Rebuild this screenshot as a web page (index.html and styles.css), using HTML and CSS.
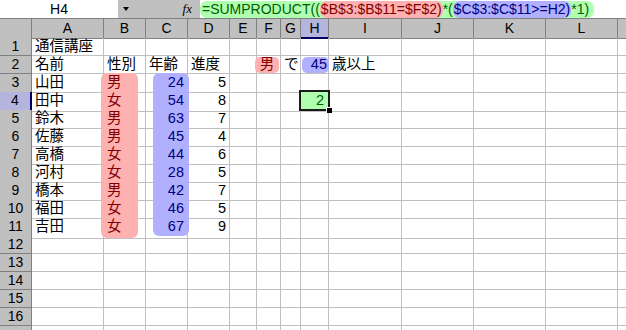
FILE: index.html
```html
<!DOCTYPE html>
<html lang="ja">
<head>
<meta charset="UTF-8">
<title>SUMPRODUCT</title>
<link rel="stylesheet" href="styles.css">
</head>
<body>
<div class="fbar">
    <div class="namebox">H4</div>
    <div class="tools">
        <span class="arrow"></span>
        <span class="fx">fx</span>
    </div>
    <div class="formula">
        <span class="f-all">=SUMPRODUCT((<span class="f-red">$B$3:$B$11=$F$2)</span>*(<span class="f-blue">$C$3:$C$11&gt;=H2)</span>*1)</span>
    </div>
</div>

<div class="sheet">
    <div class="row head">
        <div class="corner"></div>
        <div class="ch">A</div><div class="ch">B</div><div class="ch">C</div><div class="ch">D</div>
        <div class="ch">E</div><div class="ch">F</div><div class="ch">G</div><div class="ch on">H</div>
        <div class="ch">I</div><div class="ch">J</div><div class="ch">K</div><div class="ch">L</div><div class="ch"></div>
    </div>

    <div class="row">
        <div class="rh">1</div>
        <div class="c">通信講座</div><div class="c"></div><div class="c"></div><div class="c"></div>
        <div class="c"></div><div class="c"></div><div class="c"></div><div class="c"></div>
        <div class="c"></div><div class="c"></div><div class="c"></div><div class="c"></div><div class="c"></div>
    </div>
    <div class="row">
        <div class="rh">2</div>
        <div class="c">名前</div><div class="c">性別</div><div class="c">年齢</div><div class="c">進度</div>
        <div class="c"></div>
        <div class="c bare"><div class="pill red">男</div></div>
        <div class="c">で</div>
        <div class="c bare"><div class="pill blue">45</div></div>
        <div class="c">歳以上</div><div class="c"></div><div class="c"></div><div class="c"></div><div class="c"></div>
    </div>
    <div class="row">
        <div class="rh">3</div>
        <div class="c">山田</div>
        <div class="c bare"><div class="band red first">男</div></div>
        <div class="c bare"><div class="band blue first">24</div></div>
        <div class="c n">5</div>
        <div class="c"></div><div class="c"></div><div class="c"></div><div class="c"></div>
        <div class="c"></div><div class="c"></div><div class="c"></div><div class="c"></div><div class="c"></div>
    </div>
    <div class="row">
        <div class="rh on">4</div>
        <div class="c">田中</div>
        <div class="c bare"><div class="band red">女</div></div>
        <div class="c bare"><div class="band blue">54</div></div>
        <div class="c n">8</div>
        <div class="c"></div><div class="c"></div><div class="c"></div>
        <div class="c bare"><div class="sel">2</div></div>
        <div class="c"></div><div class="c"></div><div class="c"></div><div class="c"></div><div class="c"></div>
    </div>
    <div class="row">
        <div class="rh">5</div>
        <div class="c">鈴木</div>
        <div class="c bare"><div class="band red">男</div></div>
        <div class="c bare"><div class="band blue">63</div></div>
        <div class="c n">7</div>
        <div class="c"></div><div class="c"></div><div class="c"></div><div class="c"></div>
        <div class="c"></div><div class="c"></div><div class="c"></div><div class="c"></div><div class="c"></div>
    </div>
    <div class="row">
        <div class="rh">6</div>
        <div class="c">佐藤</div>
        <div class="c bare"><div class="band red">男</div></div>
        <div class="c bare"><div class="band blue">45</div></div>
        <div class="c n">4</div>
        <div class="c"></div><div class="c"></div><div class="c"></div><div class="c"></div>
        <div class="c"></div><div class="c"></div><div class="c"></div><div class="c"></div><div class="c"></div>
    </div>
    <div class="row">
        <div class="rh">7</div>
        <div class="c">高橋</div>
        <div class="c bare"><div class="band red">女</div></div>
        <div class="c bare"><div class="band blue">44</div></div>
        <div class="c n">6</div>
        <div class="c"></div><div class="c"></div><div class="c"></div><div class="c"></div>
        <div class="c"></div><div class="c"></div><div class="c"></div><div class="c"></div><div class="c"></div>
    </div>
    <div class="row">
        <div class="rh">8</div>
        <div class="c">河村</div>
        <div class="c bare"><div class="band red">女</div></div>
        <div class="c bare"><div class="band blue">28</div></div>
        <div class="c n">5</div>
        <div class="c"></div><div class="c"></div><div class="c"></div><div class="c"></div>
        <div class="c"></div><div class="c"></div><div class="c"></div><div class="c"></div><div class="c"></div>
    </div>
    <div class="row">
        <div class="rh">9</div>
        <div class="c">橋本</div>
        <div class="c bare"><div class="band red">男</div></div>
        <div class="c bare"><div class="band blue">42</div></div>
        <div class="c n">7</div>
        <div class="c"></div><div class="c"></div><div class="c"></div><div class="c"></div>
        <div class="c"></div><div class="c"></div><div class="c"></div><div class="c"></div><div class="c"></div>
    </div>
    <div class="row">
        <div class="rh">10</div>
        <div class="c">福田</div>
        <div class="c bare"><div class="band red">女</div></div>
        <div class="c bare"><div class="band blue">46</div></div>
        <div class="c n">5</div>
        <div class="c"></div><div class="c"></div><div class="c"></div><div class="c"></div>
        <div class="c"></div><div class="c"></div><div class="c"></div><div class="c"></div><div class="c"></div>
    </div>
    <div class="row">
        <div class="rh">11</div>
        <div class="c">吉田</div>
        <div class="c bare"><div class="band red last">女</div></div>
        <div class="c bare"><div class="band blue last">67</div></div>
        <div class="c n">9</div>
        <div class="c"></div><div class="c"></div><div class="c"></div><div class="c"></div>
        <div class="c"></div><div class="c"></div><div class="c"></div><div class="c"></div><div class="c"></div>
    </div>

    <div class="row"><div class="rh">12</div><div class="c"></div><div class="c"></div><div class="c"></div><div class="c"></div><div class="c"></div><div class="c"></div><div class="c"></div><div class="c"></div><div class="c"></div><div class="c"></div><div class="c"></div><div class="c"></div><div class="c"></div></div>
    <div class="row"><div class="rh">13</div><div class="c"></div><div class="c"></div><div class="c"></div><div class="c"></div><div class="c"></div><div class="c"></div><div class="c"></div><div class="c"></div><div class="c"></div><div class="c"></div><div class="c"></div><div class="c"></div><div class="c"></div></div>
    <div class="row"><div class="rh">14</div><div class="c"></div><div class="c"></div><div class="c"></div><div class="c"></div><div class="c"></div><div class="c"></div><div class="c"></div><div class="c"></div><div class="c"></div><div class="c"></div><div class="c"></div><div class="c"></div><div class="c"></div></div>
    <div class="row"><div class="rh">15</div><div class="c"></div><div class="c"></div><div class="c"></div><div class="c"></div><div class="c"></div><div class="c"></div><div class="c"></div><div class="c"></div><div class="c"></div><div class="c"></div><div class="c"></div><div class="c"></div><div class="c"></div></div>
    <div class="row"><div class="rh">16</div><div class="c"></div><div class="c"></div><div class="c"></div><div class="c"></div><div class="c"></div><div class="c"></div><div class="c"></div><div class="c"></div><div class="c"></div><div class="c"></div><div class="c"></div><div class="c"></div><div class="c"></div></div>
    <div class="row"><div class="rh"></div><div class="c"></div><div class="c"></div><div class="c"></div><div class="c"></div><div class="c"></div><div class="c"></div><div class="c"></div><div class="c"></div><div class="c"></div><div class="c"></div><div class="c"></div><div class="c"></div><div class="c"></div></div>
</div>
</body>
</html>
```

FILE: styles.css
```css
body {
    margin: 0;
    background: #fff;
    font-family: "Liberation Sans", "Noto Sans CJK JP", sans-serif;
    font-size: 14px;
    color: #000;
    overflow: hidden;
}

/* formula bar */
.fbar {
    display: flex;
    height: 18px;
    background: #c0c0c0;
    border-bottom: 1px solid #808080;
}

.namebox {
    width: 118px;
    background: #fff;
    text-align: center;
    line-height: 18px;
}

.tools {
    width: 82px;
    display: flex;
    align-items: center;
    justify-content: space-between;
    padding: 0 8px 0 5px;
    box-sizing: border-box;
}

.arrow {
    width: 0;
    height: 0;
    border-left: 3px solid transparent;
    border-right: 3px solid transparent;
    border-top: 4px solid #000;
}

.fx {
    font-family: "Liberation Serif", serif;
    font-style: italic;
    font-size: 13px;
}

.formula {
    flex: 1;
    display: flex;
    align-items: center;
    background: #fff;
    height: 18px;
}

.f-all {
    background: #b0ffb0;
    color: #006000;
    border-radius: 7px;
    padding: 0 5px 0 2px;
    line-height: 17px;
    height: 17px;
    white-space: nowrap;
}

.f-red,
.f-blue {
    display: inline-block;
    border-radius: 7px;
    padding: 0 1px;
}

.f-red {
    background: #ffb0b0;
    color: #800000;
}

.f-blue {
    background: #b0b0ff;
    color: #000080;
}

/* sheet */
.sheet {
    overflow: hidden;
}

.row {
    display: grid;
    grid-template-columns: 32px 72px 42px 42px 42px 27px 24px 20px 28px 73px 72px 72px 72px 9px;
    height: 18px;
}

.row.head {
    height: 19px;
}

.corner,
.ch,
.rh {
    background: #c0c0c0;
    border-right: 1px solid #808080;
    border-bottom: 1px solid #808080;
    text-align: center;
    line-height: 18px;
    box-sizing: border-box;
}

.ch.on {
    background: #b4b4dc;
    border-bottom: 2px solid #000060;
}

.rh.on {
    background: #b4b4dc;
    border-right: 2px solid #000060;
}

.rh {
    line-height: 17px;
}

.c {
    border-right: 1px solid #c0c0c0;
    border-bottom: 1px solid #c0c0c0;
    box-sizing: border-box;
    padding: 0 3px;
    line-height: 17px;
    white-space: nowrap;
    font-size: 14.5px;
}

.c.n {
    text-align: right;
}

.c.bare {
    padding: 0;
}

/* highlighted ranges */
.band {
    position: relative;
    z-index: 1;
    height: 18px;
    line-height: 17px;
}

.band.red {
    margin-left: -3px;
    width: 37px;
    padding-left: 6px;
    box-sizing: border-box;
    background: #ffb0b0;
    color: #800000;
}

.band.blue {
    margin-left: 7px;
    width: 36px;
    padding-right: 5px;
    box-sizing: border-box;
    text-align: right;
    background: #b0b0ff;
    color: #000080;
}

.band.first {
    margin-top: -1px;
    height: 19px;
    padding-top: 1px;
    border-radius: 6px 6px 0 0;
}

.band.last {
    border-radius: 0 0 6px 6px;
}

.band.red.last {
    height: 20px;
}

.pill {
    margin-top: 1px;
    height: 16px;
    line-height: 15px;
    border-radius: 5px;
    box-sizing: border-box;
}

.pill.red {
    margin-left: -2px;
    width: 24px;
    text-align: center;
    background: #ffb0b0;
    color: #800000;
}

.pill.blue {
    margin-left: 1px;
    width: 27px;
    padding-right: 2px;
    text-align: right;
    background: #b0b0ff;
    color: #000080;
}

/* active cell */
.sel {
    position: relative;
    z-index: 2;
    margin: -2px 0 0 -2px;
    width: 31px;
    height: 21px;
    border: 2px solid #1a1a1a;
    box-sizing: border-box;
    background: #b0ffb0;
    color: #006000;
    text-align: right;
    padding-right: 4px;
    line-height: 17px;
}

.sel::after {
    content: "";
    position: absolute;
    right: -4px;
    bottom: -4px;
    width: 5px;
    height: 5px;
    background: #000;
    border: 1px solid #fff;
    border-width: 1px 0 0 1px;
}
```
